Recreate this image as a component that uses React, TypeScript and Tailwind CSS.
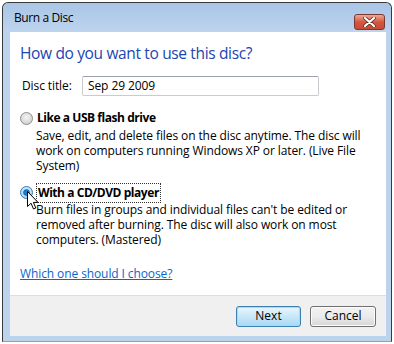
import React from "react";

function Radio({ checked }: { checked?: boolean }) {
  return (
    <svg width="13" height="13" viewBox="0 0 13 13" className="shrink-0">
      <defs>
        <radialGradient id={checked ? "rc" : "ru"} cx="50%" cy="40%" r="60%">
          <stop offset="0%" stopColor={checked ? "#e8f6fd" : "#f4f4f4"} />
          <stop offset="100%" stopColor={checked ? "#9fd2ef" : "#d0d0d0"} />
        </radialGradient>
      </defs>
      <circle cx="6.5" cy="6.5" r="6" fill={`url(#${checked ? "rc" : "ru"})`} stroke={checked ? "#3c7fb1" : "#8e8f8f"} strokeWidth="1" />
      {checked && <circle cx="6.5" cy="6.5" r="3" fill="#1a7fd0" stroke="#0c4f8a" strokeWidth="0.6" />}
    </svg>
  );
}

export default function App() {
  const font = { fontFamily: '"Open Sans", "Noto Sans", sans-serif' };
  return (
    <div className="w-[394px] h-[344px] bg-white pl-[2px] pt-[2px]" style={font}>
      <div className="relative w-[390px] h-[340px] flex flex-col border-l border-t border-r border-[#3a3a3a] rounded-t-[6px] bg-[#bcd3ee] border-b-[1px] border-b-[#38c6e2]">
        {/* title bar */}
        <div className="h-[29px] flex items-center justify-between pl-[11px] pr-[6px] rounded-t-[6px] bg-gradient-to-b from-[#a9c5e6] to-[#bed4ee]">
          <span className="text-[12px] tracking-[-0.4px] text-black mt-[1px]">Burn a Disc</span>
          <div className="w-[31px] h-[16px] mt-[11px] mb-auto flex items-center justify-center rounded-[3px] border border-[#7a3a32] bg-gradient-to-b from-[#eaa898] via-[#d5563f] to-[#c94b33]">
            <svg width="13" height="10" viewBox="0 0 13 10">
              <path d="M2 1 L11 9 M11 1 L2 9" stroke="#5a2a22" strokeWidth="3.6" strokeLinecap="round" />
              <path d="M2 1 L11 9 M11 1 L2 9" stroke="#ffffff" strokeWidth="2.2" strokeLinecap="round" />
            </svg>
          </div>
        </div>
        {/* body */}
        <div className="flex-1 flex flex-col mb-[5px] ml-[7px] mr-[5px]">
          <div className="h-[263px] bg-white flex flex-col pl-[10px] pt-[10px] text-[12px] tracking-[-0.1px] text-black">
            <div className="text-[15.5px] tracking-[-0.35px] leading-[22px] text-[#1c45b0]">How do you want to use this disc?</div>
            <div className="flex items-center mt-[12px] h-[20px]">
              <span className="w-[62px] pl-[2px]">Disc title:</span>
              <div className="w-[237px] h-[20px] border border-[#c9cbd0] border-t-[#9da1a8] rounded-[2px] flex items-center pl-[5px]">
                Sep 29 2009
              </div>
            </div>
            <div className="flex items-center gap-[3px] mt-[14px] h-[16px]">
              <Radio />
              <span className="font-bold tracking-[-0.45px] pl-[1px]">Like a USB flash drive</span>
            </div>
            <div className="pl-[16px] leading-[15px] mt-[2px] w-[352px]">
              Save, edit, and delete files on the disc anytime. The disc will work on computers running Windows XP or later. (Live File System)
            </div>
            <div className="relative flex items-center gap-[3px] mt-[11px] h-[17px]">
              <Radio checked />
              <span className="font-bold tracking-[-0.45px] px-[1px] border border-dotted border-[#333]">With a CD/DVD player</span>
              <svg className="absolute left-[7px] top-[7px]" width="12" height="19" viewBox="0 0 12 19">
                <path d="M0.5 0.5 L0.5 15.5 L4 12.2 L6.5 18 L8.8 17 L6.4 11.4 L11 11.4 Z" fill="#ffffff" stroke="#000000" strokeWidth="1" strokeLinejoin="miter" />
              </svg>
            </div>
            <div className="pl-[16px] leading-[15px] mt-[1px] w-[352px]">
              Burn files in groups and individual files can't be edited or removed after burning. The disc will also work on most computers. (Mastered)
            </div>
            <a className="mt-[18px] text-[#0a66cc] underline">Which one should I choose?</a>
          </div>
          <div className="flex-1 bg-[#f0f0f0] border-t border-[#dfdfdf] flex items-center justify-end gap-[9px] pr-[10px]">
            <button className="w-[65px] h-[21px] rounded-[3px] border border-[#3c7fb1] bg-gradient-to-b from-[#eaf6fd] via-[#c8e7f8] to-[#a7d9f5] text-[12px] leading-none text-black shadow-[inset_0_0_0_1px_#9ce0f8]">
              Next
            </button>
            <button className="w-[66px] h-[21px] rounded-[3px] border border-[#707070] bg-gradient-to-b from-[#f2f2f2] via-[#ebebeb] to-[#d6d6d6] text-[12px] leading-none text-black shadow-[inset_0_0_0_1px_#fcfcfc]">
              Cancel
            </button>
          </div>
        </div>
      </div>
    </div>
  );
}
